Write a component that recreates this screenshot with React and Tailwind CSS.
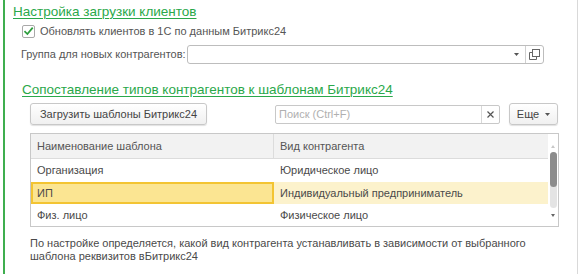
import React from "react";

export default function App() {
  return (
    <div className="w-[586px] h-[274px] bg-white flex font-['Liberation_Sans',Arial,sans-serif] text-[#4a4a4a] text-[11px] leading-none overflow-hidden">
      <div className="w-[3px] shrink-0" />
      <div className="w-[575px] shrink-0 h-full border-l-2 border-[#3fae4f] border-r border-r-[#d9d9d9] flex flex-col">
        {/* Title 1 */}
        <div className="pl-[8px] pt-[4px] h-[20px]">
          <span className="text-[13.5px] text-[#2aa84a] underline underline-offset-[2px] decoration-1 leading-[16px]">
            Настройка загрузки клиентов
          </span>
        </div>
        {/* Checkbox row */}
        <div className="flex items-center pl-[17px] mt-[5px] h-[13px]">
          <div className="w-[13px] h-[13px] border border-[#a9a9a9] rounded-[2px] bg-white flex items-center justify-center">
            <svg width="13" height="13" viewBox="0 0 13 13">
              <path d="M2.5 6.8 L5.2 9.5 L10.8 2.8" stroke="#2e9e3e" strokeWidth="2.1" fill="none" strokeLinecap="square" />
            </svg>
          </div>
          <span className="ml-[5px] text-[#555] whitespace-nowrap">Обновлять клиентов в 1С по данным Битрикс24</span>
        </div>
        {/* Group row */}
        <div className="flex items-center pl-[16px] mt-[7px] h-[19px]">
          <span className="w-[166px] shrink-0 text-[#555] whitespace-nowrap">Группа для новых контрагентов:</span>
          <div className="w-[357px] h-[19px] border border-[#bdbdbd] rounded-[3px] flex bg-white">
            <div className="flex-1" />
            <div className="w-[18px] flex items-center justify-center">
              <svg width="5" height="3" viewBox="0 0 5 3"><path d="M0 0 L5 0 L2.5 3 Z" fill="#555" /></svg>
            </div>
            <div className="w-[18px] border-l border-[#d0d0d0] flex items-center justify-center">
              <svg width="11" height="11" viewBox="0 0 11 11" fill="none" stroke="#666" strokeWidth="1">
                <rect x="3.5" y="0.5" width="7" height="7" />
                <path d="M3.5 3.5 H0.5 V10.5 H7.5 V7.5" />
              </svg>
            </div>
          </div>
        </div>
        {/* Title 2 */}
        <div className="pl-[17px] mt-[18px] h-[16px]">
          <span className="text-[13.5px] text-[#2aa84a] underline underline-offset-[2px] decoration-1 leading-[16px] whitespace-nowrap">
            Сопоставление типов контрагентов к шаблонам Битрикс24
          </span>
        </div>
        {/* Button row */}
        <div className="flex items-center pl-[25px] mt-[5px] h-[22px]">
          <div className="w-[177px] h-[22px] border border-[#c8c8c8] rounded-[3px] bg-gradient-to-b from-white to-[#f0f0f0] shadow-[0_1px_1px_rgba(0,0,0,0.12)] flex items-center justify-center text-[#444] whitespace-nowrap">
            Загрузить шаблоны Битрикс24
          </div>
          <div className="ml-[68px] w-[225px] h-[19px] border border-[#c8c8c8] rounded-[2px] flex bg-white">
            <div className="flex-1 flex items-center pl-[3px] text-[#b0b0b0]">Поиск (Ctrl+F)</div>
            <div className="w-[18px] border-l border-[#d8d8d8] flex items-center justify-center">
              <svg width="7" height="7" viewBox="0 0 7 7" stroke="#555" strokeWidth="1.2"><path d="M0.5 0.5 L6.5 6.5 M6.5 0.5 L0.5 6.5" /></svg>
            </div>
          </div>
          <div className="ml-[9px] w-[49px] h-[22px] border border-[#c8c8c8] rounded-[3px] bg-gradient-to-b from-white to-[#f0f0f0] shadow-[0_1px_1px_rgba(0,0,0,0.12)] flex items-center justify-center text-[#444]">
            <span>Еще</span>
            <svg className="ml-[6px]" width="5" height="3" viewBox="0 0 5 3"><path d="M0 0 L5 0 L2.5 3 Z" fill="#555" /></svg>
          </div>
        </div>
        {/* Table */}
        <div className="ml-[25px] mt-[8px] w-[529px] h-[94px] border border-[#c8c8c8] flex">
          <div className="flex-1 flex flex-col">
            <div className="h-[25px] bg-[#f2f2f2] border-b border-[#dcdcdc] flex">
              <div className="w-[243px] border-r border-[#dcdcdc] flex items-center pl-[6px] text-[#555]">Наименование шаблона</div>
              <div className="flex-1 flex items-center pl-[6px] text-[#555]">Вид контрагента</div>
            </div>
            <div className="h-[23px] flex">
              <div className="w-[243px] flex items-center pl-[6px]">Организация</div>
              <div className="flex-1 flex items-center pl-[6px]">Юридическое лицо</div>
            </div>
            <div className="h-[22px] flex bg-[#fcf2cc]">
              <div className="w-[243px] bg-[#fbe592] border-2 border-[#f3c432] flex items-center pl-[4px]">ИП</div>
              <div className="flex-1 flex items-center pl-[6px]">Индивидуальный предприниматель</div>
            </div>
            <div className="h-[22px] flex">
              <div className="w-[243px] flex items-center pl-[6px]">Физ. лицо</div>
              <div className="flex-1 flex items-center pl-[6px]">Физическое лицо</div>
            </div>
          </div>
          <div className="w-[10px] flex flex-col items-center bg-white">
            <div className="h-[14px] flex items-end justify-center">
              <svg width="4" height="3" viewBox="0 0 4 3"><path d="M0 3 L4 3 L2 0 Z" fill="#c8c8c8" /></svg>
            </div>
            <div className="mt-[4px] w-[7px] h-[56px] rounded-[4px] bg-[#e4e4e4] flex flex-col">
              <div className="h-[35px] rounded-[4px] bg-[#8c8c8c]" />
            </div>
            <div className="mt-[6px]">
              <svg width="4" height="3" viewBox="0 0 4 3"><path d="M0 0 L4 0 L2 3 Z" fill="#666" /></svg>
            </div>
          </div>
        </div>
        {/* Note */}
        <div className="ml-[25px] mt-[10px] leading-[13px] text-[#4a4a4a]">
          По настройке определяется, какой вид контрагента устанавливать в зависимости от выбранного
          <br />
          шаблона реквизитов вБитрикс24
        </div>
      </div>
    </div>
  );
}
